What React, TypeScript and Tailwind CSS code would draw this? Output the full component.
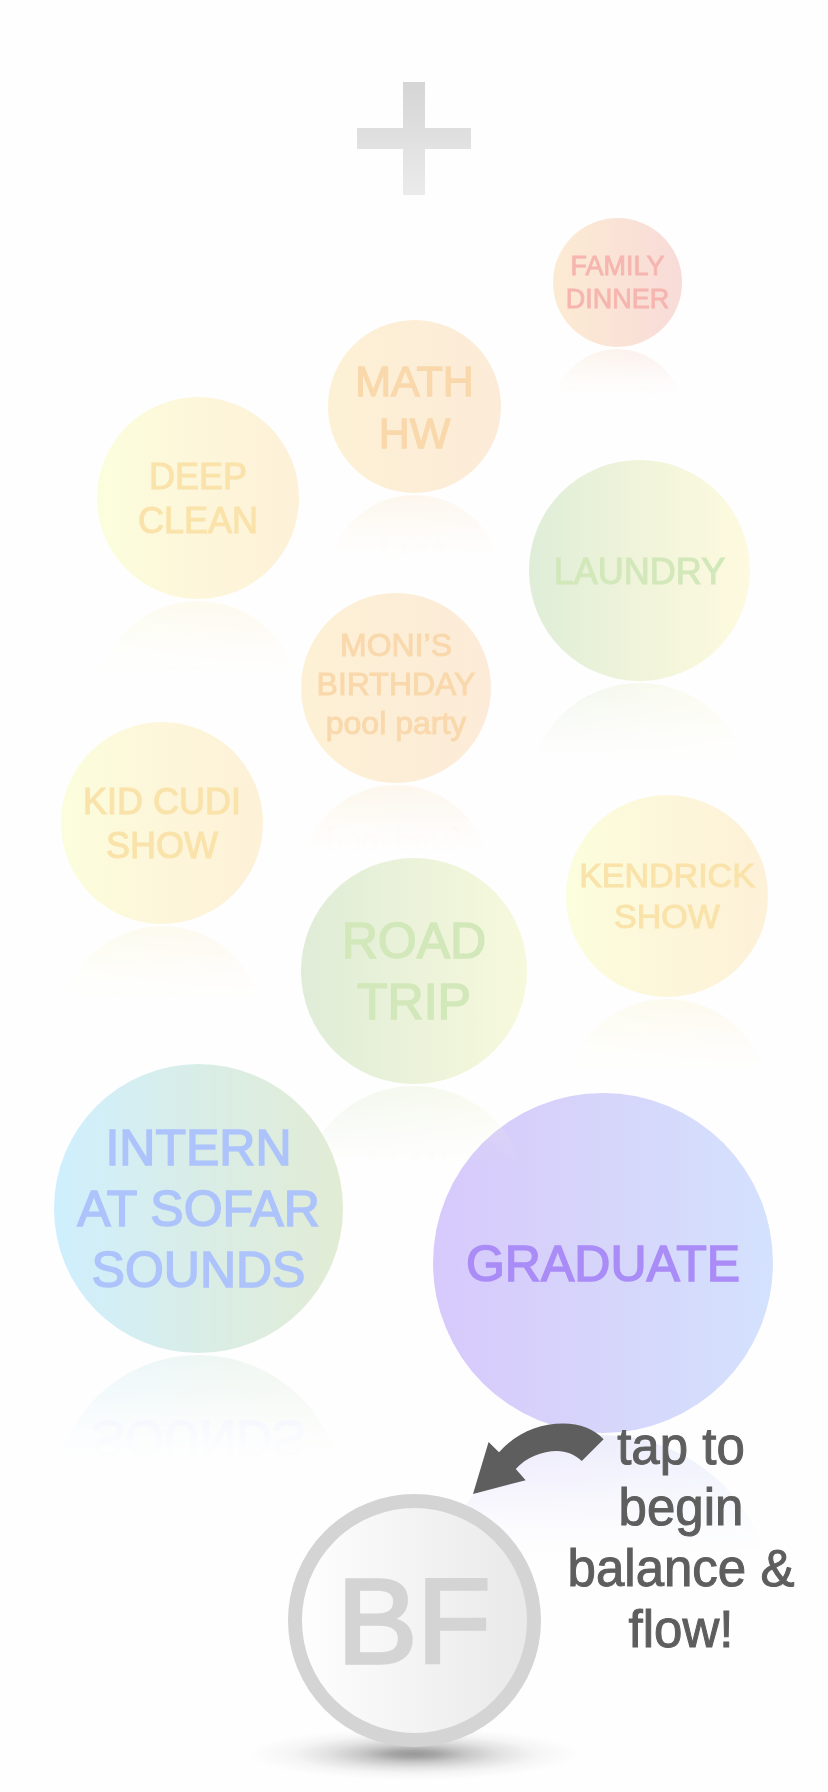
type Goal = {
  id: string;
  lines: string[];
  place: string;
  fill: string;
  text: string;
};

const goals: Goal[] = [
  {
    id: "family-dinner",
    lines: ["FAMILY", "DINNER"],
    place: "left-[calc(50%+139px)] top-[23px] size-[129px]",
    fill: "from-[#fcebd3] to-[#f8dbd8]",
    text: "text-[27px] leading-[33px] text-[#f6b5af]",
  },
  {
    id: "math-hw",
    lines: ["MATH", "HW"],
    place: "left-[calc(50%-86px)] top-[125px] size-[173px]",
    fill: "from-[#fdf1d5] to-[#fcebd8]",
    text: "text-[43px] leading-[52px] text-[#f9d8ac]",
  },
  {
    id: "deep-clean",
    lines: ["DEEP", "CLEAN"],
    place: "left-[calc(50%-317px)] top-[202px] size-[202px]",
    fill: "from-[#fbfedd] via-[#fdf6da] to-[#fdf1d8]",
    text: "pt-0.5 text-[36px] leading-[44px] text-[#fae3aa]",
  },
  {
    id: "laundry",
    lines: ["LAUNDRY"],
    place: "left-[calc(50%+115px)] top-[265px] size-[221px]",
    fill: "from-[#dfedd8] via-[#f0f4da] to-[#fefadf]",
    text: "pt-0.5 text-[36px] leading-[44px] text-[#d2e8ba]",
  },
  {
    id: "birthday",
    lines: ["MONI’S", "BIRTHDAY", "pool party"],
    place: "left-[calc(50%-113px)] top-[398px] size-[190px]",
    fill: "from-[#fdf1d5] to-[#fcebd8]",
    text: "pb-2 text-[32px] leading-[39px] text-[#f9d8ac]",
  },
  {
    id: "kid-cudi",
    lines: ["KID CUDI", "SHOW"],
    place: "left-[calc(50%-353px)] top-[527px] size-[202px]",
    fill: "from-[#fbfedd] via-[#fdf6da] to-[#fdf1d8]",
    text: "pt-0.5 text-[36px] leading-[44px] text-[#fae3aa]",
  },
  {
    id: "kendrick",
    lines: ["KENDRICK", "SHOW"],
    place: "left-[calc(50%+152px)] top-[600px] size-[202px]",
    fill: "from-[#fbfedd] via-[#fdf6da] to-[#fdf1d8]",
    text: "text-[34px] leading-[41px] text-[#fae3aa]",
  },
  {
    id: "graduate",
    lines: ["GRADUATE"],
    place: "left-[calc(50%+19px)] top-[898px] size-[340px]",
    fill: "from-[#d7c9fc] via-[#d6d5fa] to-[#d4e2fe]",
    text: "pt-0.5 text-[50px] leading-[61px] text-[#aa8cf7]",
  },
  {
    id: "road-trip",
    lines: ["ROAD", "TRIP"],
    place: "left-[calc(50%-113px)] top-[663px] size-[226px]",
    fill: "from-[#dfecd7] to-[#f7f9dc]",
    text: "pt-0.5 text-[50px] leading-[61px] text-[#d2e8ba]",
  },
  {
    id: "intern",
    lines: ["INTERN", "AT SOFAR", "SOUNDS"],
    place: "left-[calc(50%-360px)] top-[869px] size-[289px]",
    fill: "from-[#cfeffe] via-[#d9ede7] to-[#e2ecd4]",
    text: "pt-0.5 text-[50px] leading-[61px] text-[#adc3fb]",
  },
];

function Bubble({ goal }: { goal: Goal }) {
  return (
    <button
      type="button"
      className={`absolute flex flex-col items-center justify-center rounded-full bg-linear-to-r whitespace-nowrap [-webkit-box-reflect:below_2px_linear-gradient(transparent_64%,rgba(0,0,0,0.07)_74%,rgba(0,0,0,0.42))] [-webkit-text-stroke:0.03em_currentColor] ${goal.place} ${goal.fill} ${goal.text}`}
    >
      {goal.lines.map((line) => (
        <span key={line} className="block">
          {line}
        </span>
      ))}
    </button>
  );
}

function PlusIcon() {
  return (
    <svg viewBox="0 0 114 113" className="h-[113px] w-[114px]" aria-hidden="true">
      <defs>
        <linearGradient id="plus-fill" x1="0" y1="0" x2="0" y2="1">
          <stop offset="0" stopColor="#d5d5d5" />
          <stop offset="1" stopColor="#ebebeb" />
        </linearGradient>
      </defs>
      <path d="M46 0h22v46h46v21H68v46H46V67H0V46h46z" fill="url(#plus-fill)" />
    </svg>
  );
}

function HintArrow() {
  return (
    <svg
      viewBox="0 0 131 71"
      className="absolute -top-[71px] left-[calc(50%+59px)] h-[71px] w-[131px]"
      aria-hidden="true"
    >
      <path
        d="M0 71 15.6 19 26 29.2C43 10 66 .5 90 .5 107 .5 121 6 130.6 16.2L108.8 38C102 31.500 93 28 84 28 69 28 53 34.500 42.800 46L52.700 57.200Z"
        fill="#5e5e5e"
      />
    </svg>
  );
}

export default function App() {
  return (
    <main className="flex min-h-screen flex-col items-center overflow-hidden bg-[#fefefe] pt-[82px] font-['Liberation_Sans',Arial,sans-serif]">
      <button type="button" aria-label="Add">
        <PlusIcon />
      </button>

      <section className="relative min-h-[1299px] w-full flex-1" aria-label="Goals">
        {goals.map((goal) => (
          <Bubble key={goal.id} goal={goal} />
        ))}
      </section>

      <footer className="relative flex w-full justify-center pb-[45px]">
        <div className="absolute bottom-[12px] left-1/2 h-[52px] w-[330px] -translate-x-1/2 bg-[radial-gradient(closest-side,#989898_0%,#a6a6a6_14%,#c8c8c8_32%,#e2e2e2_52%,#f5f5f5_74%,#fefefe_100%)]" />
        <button
          type="button"
          className="relative flex size-[253px] items-center justify-center rounded-full border-[14px] border-[#d4d4d4] bg-linear-to-r from-[#fefefe] to-[#e9e9e9] text-[120px] leading-none text-[#d4d4d4] [-webkit-text-stroke:0.03em_currentColor]"
        >
          BF
        </button>
        <HintArrow />
        <p className="absolute -top-[78px] left-[calc(50%+147px)] w-[240px] text-center text-[51px] leading-[61px] text-[#5e5e5e] [-webkit-text-stroke:0.02em_currentColor]">
          tap to begin balance &amp; flow!
        </p>
      </footer>
    </main>
  );
}
